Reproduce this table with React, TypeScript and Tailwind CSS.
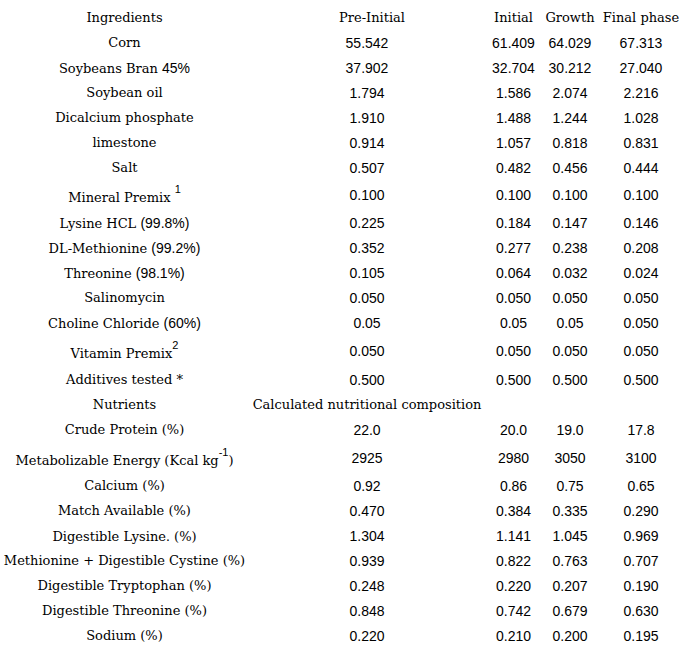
import type { ReactNode } from 'react';

type Row = {
  label: ReactNode;
  values: string[];
  h?: string;
};

const serif = "font-['DejaVu_Serif',serif]";
const sans = "font-['Liberation_Sans',Arial,sans-serif]";
const supCls = `${sans} text-[11px] -top-[9px]`;

// digits inside labels come out in the plain sans face, like the source
function mix(text: string) {
  const parts = text.split(/(\(?[\d.]+%?\)?)/);
  return parts.map((p, i) =>
    i % 2 === 1 ? (
      <span key={i} className={`${sans} text-[14px]`}>
        {p}
      </span>
    ) : (
      p
    ),
  );
}

const ingredients: Row[] = [
  { label: 'Corn', values: ['55.542', '61.409', '64.029', '67.313'] },
  { label: 'Soybeans Bran 45%', values: ['37.902', '32.704', '30.212', '27.040'] },
  { label: 'Soybean oil', values: ['1.794', '1.586', '2.074', '2.216'] },
  { label: 'Dicalcium phosphate', values: ['1.910', '1.488', '1.244', '1.028'] },
  { label: 'limestone', values: ['0.914', '1.057', '0.818', '0.831'] },
  { label: 'Salt', values: ['0.507', '0.482', '0.456', '0.444'] },
  {
    label: (
      <>
        Mineral Premix <sup className={supCls}>1</sup>
      </>
    ),
    values: ['0.100', '0.100', '0.100', '0.100'],
    h: 'h-[30px]',
  },
  { label: 'Lysine HCL (99.8%)', values: ['0.225', '0.184', '0.147', '0.146'] },
  { label: 'DL-Methionine (99.2%)', values: ['0.352', '0.277', '0.238', '0.208'] },
  { label: 'Threonine (98.1%)', values: ['0.105', '0.064', '0.032', '0.024'] },
  { label: 'Salinomycin', values: ['0.050', '0.050', '0.050', '0.050'] },
  { label: 'Choline Chloride (60%)', values: ['0.05', '0.05', '0.05', '0.050'] },
  {
    label: (
      <>
        Vitamin Premix<sup className={supCls}>2</sup>
      </>
    ),
    values: ['0.050', '0.050', '0.050', '0.050'],
    h: 'h-[32px]',
  },
  { label: 'Additives tested *', values: ['0.500', '0.500', '0.500', '0.500'] },
];

const nutrients: Row[] = [
  { label: 'Crude Protein (%)', values: ['22.0', '20.0', '19.0', '17.8'] },
  {
    label: (
      <>
        Metabolizable Energy (Kcal kg
        <sup className={supCls}>-1</sup>)
      </>
    ),
    values: ['2925', '2980', '3050', '3100'],
    h: 'h-[31px]',
  },
  { label: 'Calcium (%)', values: ['0.92', '0.86', '0.75', '0.65'] },
  { label: 'Match Available (%)', values: ['0.470', '0.384', '0.335', '0.290'] },
  { label: 'Digestible Lysine. (%)', values: ['1.304', '1.141', '1.045', '0.969'] },
  { label: 'Methionine + Digestible Cystine (%)', values: ['0.939', '0.822', '0.763', '0.707'] },
  { label: 'Digestible Tryptophan (%)', values: ['0.248', '0.220', '0.207', '0.190'] },
  { label: 'Digestible Threonine (%)', values: ['0.848', '0.742', '0.679', '0.630'] },
  { label: 'Sodium (%)', values: ['0.220', '0.210', '0.200', '0.195'] },
];

function DataRow({ row }: { row: Row }) {
  return (
    <tr className={row.h ?? 'h-[25px]'}>
      <td
        className={`${serif} text-[13px] text-center align-middle whitespace-nowrap ${
          row.h ? 'pt-[5px]' : ''
        }`}
      >
        {typeof row.label === 'string' ? mix(row.label) : row.label}
      </td>
      {row.values.map((v, i) => (
        <td key={i} className={`${sans} text-[14px] text-center align-middle`}>
          {v}
        </td>
      ))}
    </tr>
  );
}

export default function App() {
  return (
    <div className="w-[689px] h-[651px] bg-white text-black overflow-hidden pt-[5px]">
      <table className="table-fixed border-collapse w-[684px] leading-none">
        <colgroup>
          <col className="w-[249px]" />
          <col className="w-[236px]" />
          <col className="w-[57px]" />
          <col className="w-[56px]" />
          <col className="w-[86px]" />
        </colgroup>
        <tbody>
          <tr className={`h-[25px] ${serif} text-[13px]`}>
            <td className="text-center">Ingredients</td>
            <td className="text-center pl-[10px]">Pre-Initial</td>
            <td className="text-center">Initial</td>
            <td className="text-center">Growth</td>
            <td className="text-center whitespace-nowrap">Final phase</td>
          </tr>
          {ingredients.map((r, i) => (
            <DataRow key={i} row={r} />
          ))}
          <tr className={`h-[25px] ${serif} text-[13px]`}>
            <td className="text-center">Nutrients</td>
            <td className="text-center whitespace-nowrap">Calculated nutritional composition</td>
            <td />
            <td />
            <td />
          </tr>
          {nutrients.map((r, i) => (
            <DataRow key={i} row={r} />
          ))}
        </tbody>
      </table>
    </div>
  );
}
